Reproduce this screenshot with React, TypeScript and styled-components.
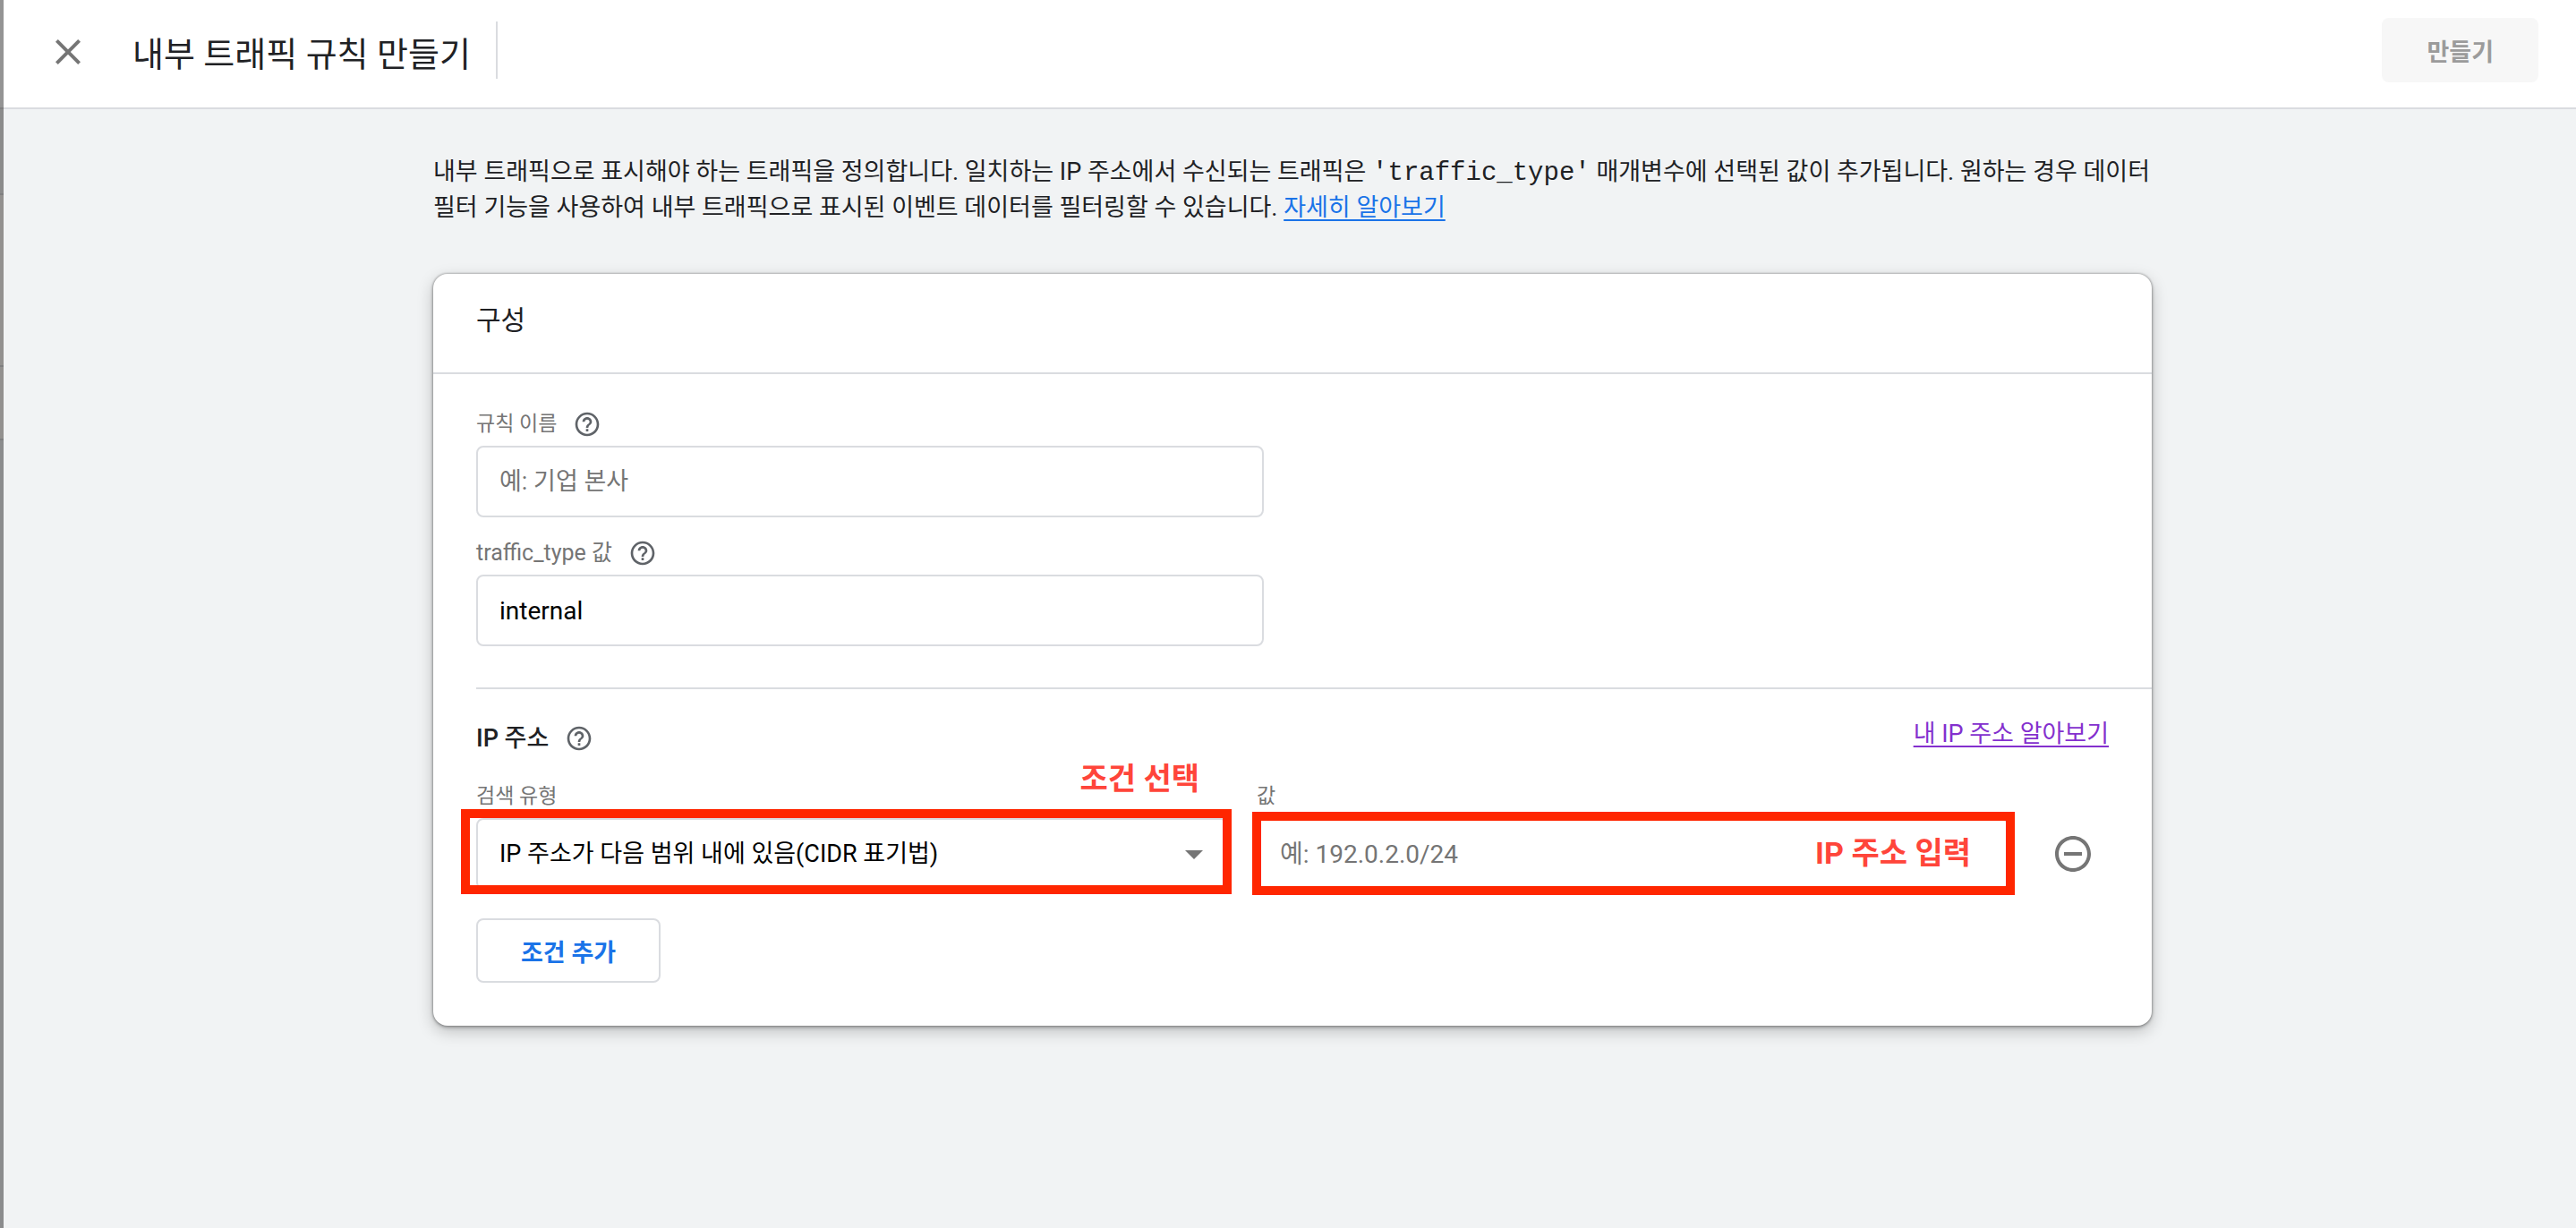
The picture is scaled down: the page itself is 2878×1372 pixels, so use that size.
import React, { useState } from 'react';
import styled, { createGlobalStyle } from 'styled-components';

const sans = `Roboto, "Noto Sans CJK KR", sans-serif`;
const mono = `"Liberation Mono", "Noto Sans CJK KR", monospace`;

const GlobalStyle = createGlobalStyle`
  * { box-sizing: border-box; }
  body { margin: 0; background: #f1f3f4; font-family: ${sans}; color: #202124; }
  button, input, select { font-family: inherit; margin: 0; }
`;

const Shell = styled.div`
  display: flex;
  min-height: 100vh;
`;

const Backdrop = styled.div`
  flex: none;
  width: 4px;
  display: flex;
  flex-direction: column;
  gap: 2px;
  background: #7f7f80;
`;

const BackdropBlock = styled.div<{ $height?: number; $color: string }>`
  ${(p) => (p.$height ? `height: ${p.$height}px;` : 'flex: 1;')}
  background: ${(p) => p.$color};
`;

const Panel = styled.div`
  flex: 1;
  min-width: 0;
  background: #f1f3f4;
`;

const TopBar = styled.header`
  display: flex;
  align-items: flex-start;
  justify-content: space-between;
  height: 122px;
  padding: 20px 42px 0 48px;
  background: #fff;
  border-bottom: 2px solid #dadce0;
`;

const TitleGroup = styled.div`
  display: flex;
  align-items: center;
  height: 72px;
`;

const IconButton = styled.button`
  display: flex;
  padding: 0;
  border: 0;
  background: none;
  color: #757575;
  cursor: pointer;
`;

const CloseButton = styled(IconButton)`
  padding-top: 4px;
`;

const PageTitle = styled.h1`
  margin: 0 0 0 48px;
  padding: 10px 28px 0 0;
  border-right: 2px solid #dadce0;
  font-size: 38px;
  font-weight: 400;
  line-height: 54px;
`;

const CreateButton = styled.button`
  height: 72px;
  padding: 0 50px;
  border: 0;
  border-radius: 8px;
  background: #f7f7f7;
  color: #9b9b9b;
  font-size: 27px;
  font-weight: 700;
`;

const Content = styled.main`
  padding: 50px 474px 48px 480px;
`;

const Description = styled.p`
  margin: 0 0 54px;
  font-size: 27px;
  line-height: 40px;
`;

const Code = styled.code`
  font-family: ${mono};
  font-size: 29px;
  line-height: 0;
`;

const TextLink = styled.a<{ $visited?: boolean }>`
  color: ${(p) => (p.$visited ? '#8430ce' : '#1a73e8')};
  font-size: 27px;
  text-decoration: underline;
  text-decoration-thickness: 2px;
  text-underline-offset: 4px;
`;

const Card = styled.section`
  background: #fff;
  border-radius: 16px;
  box-shadow: 0 0 2px 1px rgba(0, 0, 0, 0.2), 0 2px 4px rgba(0, 0, 0, 0.24), 0 6px 18px rgba(0, 0, 0, 0.22);
`;

const CardTitle = styled.h2`
  margin: 0;
  padding: 28px 48px 34px;
  border-bottom: 2px solid #dadce0;
  font-size: 30px;
  font-weight: 400;
  line-height: 48px;
`;

const NameSection = styled.div`
  display: flex;
  flex-direction: column;
  gap: 22px;
  margin-left: 48px;
  padding: 38px 0 46px;
  border-bottom: 2px solid #dadce0;
`;

const Field = styled.div`
  display: flex;
  flex-direction: column;
  gap: 6px;
  width: 880px;
`;

const LabelRow = styled.div`
  display: flex;
  align-items: center;
  gap: 18px;
  height: 36px;
`;

const Label = styled.label<{ $size?: number }>`
  color: #757575;
  font-size: ${(p) => p.$size ?? 23}px;
  line-height: 36px;
`;

const TextInput = styled.input<{ $size?: number }>`
  width: 100%;
  height: 80px;
  padding: 0 24px;
  border: 2px solid #dadce0;
  border-radius: 8px;
  background: #fff;
  color: #000;
  font-size: ${(p) => p.$size ?? 28}px;
  outline: none;
  &::placeholder { color: #757575; opacity: 1; }
`;

const IpSection = styled.div`
  padding: 30px 48px 48px;
`;

const IpHeader = styled.div`
  display: flex;
  justify-content: space-between;
  align-items: flex-start;
  line-height: 40px;
`;

const IpTitle = styled.h3`
  display: flex;
  align-items: center;
  gap: 18px;
  margin: 5px 0 0;
  font-size: 27px;
  font-weight: 500;
  line-height: 40px;
`;

const ConditionRow = styled.div`
  display: flex;
  align-items: flex-end;
  gap: 32px;
  margin-top: 27px;
`;

const ConditionField = styled.div`
  flex: 1;
  min-width: 0;
  display: flex;
  flex-direction: column;
  gap: 6px;
`;

const ControlBox = styled.div`
  position: relative;
`;

const Select = styled.select`
  display: block;
  appearance: none;
  width: 100%;
  height: 80px;
  padding: 0 72px 0 24px;
  border: 2px solid #dadce0;
  border-radius: 8px;
  background: #fff;
  color: #000;
  font-size: 27px;
  outline: none;
`;

const Caret = styled.span`
  position: absolute;
  top: 36px;
  right: 28px;
  border: 10px solid transparent;
  border-top-color: #757575;
  border-bottom-width: 0;
  pointer-events: none;
`;

const Outline = styled.span<{ $inset: string }>`
  position: absolute;
  inset: ${(p) => p.$inset};
  border: 10px solid #ff2600;
  pointer-events: none;
`;

const Note = styled.span<{ $top: number; $right: number }>`
  position: absolute;
  top: ${(p) => p.$top}px;
  right: ${(p) => p.$right}px;
  color: #ff453a;
  font-size: 34px;
  font-weight: 700;
  line-height: 40px;
  pointer-events: none;
`;

const RemoveButton = styled(IconButton)`
  flex: none;
  margin: 0 16px;
  padding: 16px 0;
`;

const AddButton = styled.button`
  display: block;
  height: 72px;
  margin-top: 32px;
  padding: 0 48px;
  border: 2px solid #dadce0;
  border-radius: 8px;
  background: #fff;
  color: #1a73e8;
  font-size: 27px;
  font-weight: 700;
  cursor: pointer;
`;

function CloseIcon() {
  return (
    <svg width="48" height="48" viewBox="0 0 24 24" fill="currentColor" aria-hidden="true">
      <path d="M19 6.41 17.59 5 12 10.59 6.41 5 5 6.41 10.59 12 5 17.59 6.41 19 12 13.41 17.59 19 19 17.59 13.41 12z" />
    </svg>
  );
}

function HelpIcon() {
  return (
    <svg width="32" height="32" viewBox="0 0 24 24" fill="#5f6368" aria-hidden="true">
      <path d="M11 18h2v-2h-2v2zm1-16C6.48 2 2 6.48 2 12s4.48 10 10 10 10-4.48 10-10S17.52 2 12 2zm0 18c-4.41 0-8-3.59-8-8s3.59-8 8-8 8 3.59 8 8-3.59 8-8 8zm0-14c-2.21 0-4 1.79-4 4h2c0-1.1.9-2 2-2s2 .9 2 2c0 2-3 1.75-3 5h2c0-2.25 3-2.5 3-5 0-2.21-1.79-4-4-4z" />
    </svg>
  );
}

function RemoveIcon() {
  return (
    <svg width="48" height="48" viewBox="0 0 24 24" fill="currentColor" aria-hidden="true">
      <path d="M7 11v2h10v-2H7zm5-9C6.48 2 2 6.48 2 12s4.48 10 10 10 10-4.48 10-10S17.52 2 12 2zm0 18c-4.41 0-8-3.59-8-8s3.59-8 8-8 8 3.59 8 8-3.59 8-8 8z" />
    </svg>
  );
}

export default function App() {
  const [name, setName] = useState('');
  const [type, setType] = useState('internal');
  const [ip, setIp] = useState('');

  return (
    <>
      <GlobalStyle />
      <Shell>
        <Backdrop>
          <BackdropBlock $height={120} $color="#949494" />
          <BackdropBlock $height={94} $color="#8b8b8b" />
          <BackdropBlock $height={190} $color="#93918f" />
          <BackdropBlock $height={80} $color="#93918f" />
          <BackdropBlock $color="#8b8c8d" />
        </Backdrop>
        <Panel>
          <TopBar>
            <TitleGroup>
              <CloseButton type="button" aria-label="닫기">
                <CloseIcon />
              </CloseButton>
              <PageTitle>내부 트래픽 규칙 만들기</PageTitle>
            </TitleGroup>
            <CreateButton type="button" disabled>만들기</CreateButton>
          </TopBar>

          <Content>
            <Description>
              내부 트래픽으로 표시해야 하는 트래픽을 정의합니다. 일치하는 IP 주소에서 수신되는 트래픽은 <Code>'traffic_type'</Code> 매개변수에 선택된 값이 추가됩니다. 원하는 경우 데이터 필터 기능을 사용하여 내부 트래픽으로 표시된 이벤트 데이터를 필터링할 수 있습니다. <TextLink href="#learn">자세히 알아보기</TextLink>
            </Description>

            <Card>
              <CardTitle>구성</CardTitle>

              <NameSection>
                <Field>
                  <LabelRow>
                    <Label htmlFor="rule-name">규칙 이름</Label>
                    <HelpIcon />
                  </LabelRow>
                  <TextInput id="rule-name" $size={27} placeholder="예: 기업 본사" value={name} onChange={(e) => setName(e.target.value)} />
                </Field>
                <Field>
                  <LabelRow>
                    <Label htmlFor="traffic-type" $size={25}>traffic_type 값</Label>
                    <HelpIcon />
                  </LabelRow>
                  <TextInput id="traffic-type" value={type} onChange={(e) => setType(e.target.value)} />
                </Field>
              </NameSection>

              <IpSection>
                <IpHeader>
                  <IpTitle>IP 주소 <HelpIcon /></IpTitle>
                  <TextLink href="#my-ip" $visited>내 IP 주소 알아보기</TextLink>
                </IpHeader>

                <ConditionRow>
                  <ConditionField>
                    <Label htmlFor="match-type">검색 유형</Label>
                    <ControlBox>
                      <Select id="match-type">
                        <option>IP 주소가 다음 범위 내에 있음(CIDR 표기법)</option>
                      </Select>
                      <Caret />
                      <Outline $inset="-10px -4px -5px -17px" />
                      <Note $top={-64} $right={32}>조건 선택</Note>
                    </ControlBox>
                  </ConditionField>
                  <ConditionField>
                    <Label htmlFor="ip-value">값</Label>
                    <ControlBox>
                      <TextInput id="ip-value" placeholder="예: 192.0.2.0/24" value={ip} onChange={(e) => setIp(e.target.value)} />
                      <Outline $inset="-7px -7px -6px -5px" />
                      <Note $top={19} $right={42}>IP 주소 입력</Note>
                    </ControlBox>
                  </ConditionField>
                  <RemoveButton type="button" aria-label="조건 삭제">
                    <RemoveIcon />
                  </RemoveButton>
                </ConditionRow>

                <AddButton type="button">조건 추가</AddButton>
              </IpSection>
            </Card>
          </Content>
        </Panel>
      </Shell>
    </>
  );
}
